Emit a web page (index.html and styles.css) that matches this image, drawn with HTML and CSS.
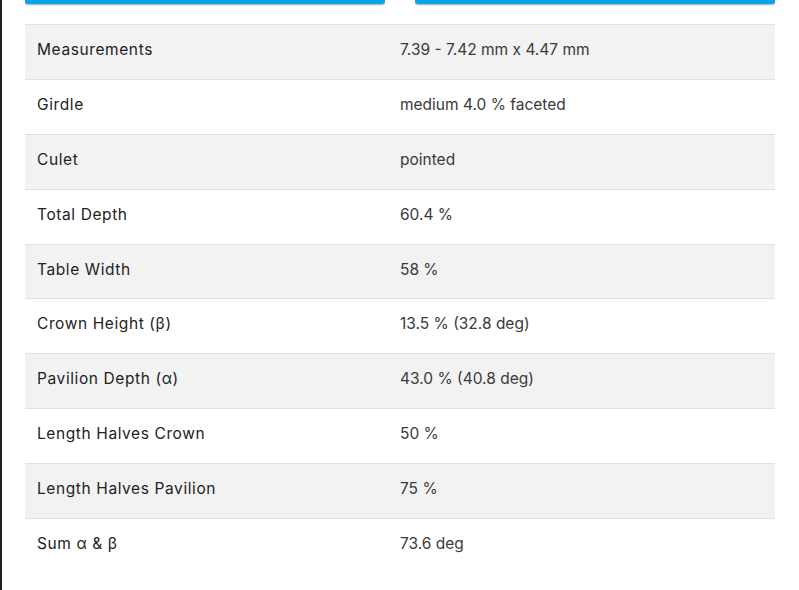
FILE: index.html
```html
<!DOCTYPE html>
<html>
<head>
<meta charset="utf-8">
<link rel="stylesheet" href="styles.css">
</head>
<body>
<div class="page">
  <div class="tabs">
    <div class="tab"></div>
    <div class="tab"></div>
  </div>
  <table class="specs">
    <tr><td class="label">Measurements</td><td class="value">7.39 - 7.42 mm x 4.47 mm</td></tr>
    <tr><td class="label">Girdle</td><td class="value">medium 4.0 % faceted</td></tr>
    <tr><td class="label">Culet</td><td class="value">pointed</td></tr>
    <tr><td class="label">Total Depth</td><td class="value">60.4 %</td></tr>
    <tr><td class="label">Table Width</td><td class="value">58 %</td></tr>
    <tr><td class="label">Crown Height (β)</td><td class="value">13.5 % (32.8 deg)</td></tr>
    <tr><td class="label">Pavilion Depth (α)</td><td class="value">43.0 % (40.8 deg)</td></tr>
    <tr><td class="label">Length Halves Crown</td><td class="value">50 %</td></tr>
    <tr><td class="label">Length Halves Pavilion</td><td class="value">75 %</td></tr>
    <tr class="last"><td class="label">Sum α &amp; β</td><td class="value">73.6 deg</td></tr>
  </table>
</div>
</body>
</html>
```
FILE: styles.css
```css
html, body {
  margin: 0;
  padding: 0;
  background: #fff;
}
body {
  font-family: "Inter", "Open Sans", sans-serif;
  color: #222;
}
.page {
  border-left: 2px solid #1b1f1f;
  min-height: 590px;
  box-sizing: border-box;
  padding-left: 23px;
}
.tabs {
  display: flex;
  gap: 30px;
  width: 750px;
  height: 24px;
  align-items: flex-start;
}
.tab {
  flex: 1;
  height: 4px;
  background: #08a4e6;
  border-radius: 0 0 3px 3px;
  box-shadow: 0 1px 2px rgba(0,0,0,0.35);
}
.specs {
  width: 750px;
  border-collapse: collapse;
  font-size: 15.5px;
}
.specs tr {
  height: 54.9px;
  border-top: 1px solid #e0e0e4;
}
.specs tr:nth-child(odd) {
  background: #f2f2f2;
}
.specs td {
  padding: 0 12px 5px;
  vertical-align: middle;
}
.label {
  width: 339px;
  color: #222;
  letter-spacing: 0.6px;
}
.value {
  color: #3a3a3a;
}
```
